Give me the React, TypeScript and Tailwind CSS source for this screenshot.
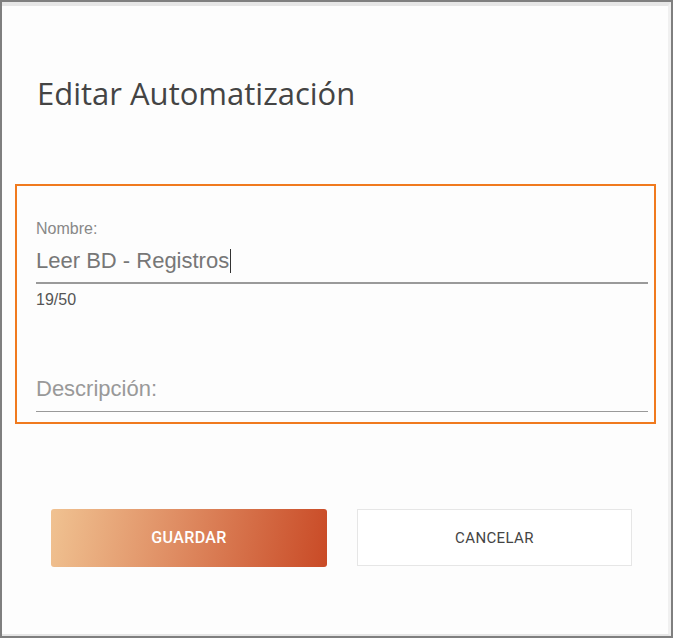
export default function App() {
  return (
    <div className="w-[673px] h-[638px] border-2 border-[#7f7f7f] bg-[#fdfdfd] flex flex-col">
      <div className="flex-1 flex flex-col border-t-4 border-t-[#e6e6e6] border-r-[3px] border-r-[#f0f0f0] border-b-2 border-b-[#e6e6e6]">
        <h1
          className="mt-[72px] ml-[35px] text-[31px] leading-[31px] text-[#444]"
          style={{ fontFamily: '"Open Sans", sans-serif' }}
        >
          Editar Automatización
        </h1>

        <div
          className="mt-[75px] ml-[13px] w-[641px] h-[240px] border-2 border-[#f07a1e] pl-[19px] pr-[6px] pt-[35px]"
          style={{ fontFamily: '"Liberation Sans", Arial, sans-serif' }}
        >
          <div className="text-[16px] leading-4 text-[#888]">Nombre:</div>
          <div className="mt-[10px] flex items-center h-[28px] text-[22px] leading-[28px] text-[#777]">
            <span>Leer BD - Registros</span>
            <span className="ml-[1px] w-px h-[24px] bg-[#333]" />
          </div>
          <div className="mt-[7px] h-[2px] bg-[#9a9a9a]" />
          <div className="mt-[8px] text-[16px] leading-4 text-[#555]">19/50</div>

          <div className="mt-[67px] h-[28px] text-[22px] leading-[28px] text-[#999]">Descripción:</div>
          <div className="mt-[8px] h-px bg-[#999]" />
        </div>

        <div
          className="mt-[85px] ml-[49px] flex gap-[30px]"
          style={{ fontFamily: 'Roboto, "Liberation Sans", sans-serif' }}
        >
          <button className="w-[276px] h-[58px] rounded-[3px] bg-[linear-gradient(100deg,#f0c291,#df8d63_45%,#c94a26)] text-white text-[16px] font-medium tracking-wide">
            GUARDAR
          </button>
          <button className="w-[275px] h-[57px] pt-[2px] border border-[#e6e6e6] bg-white text-[#444] text-[15px] tracking-wide">
            CANCELAR
          </button>
        </div>
      </div>
    </div>
  );
}
